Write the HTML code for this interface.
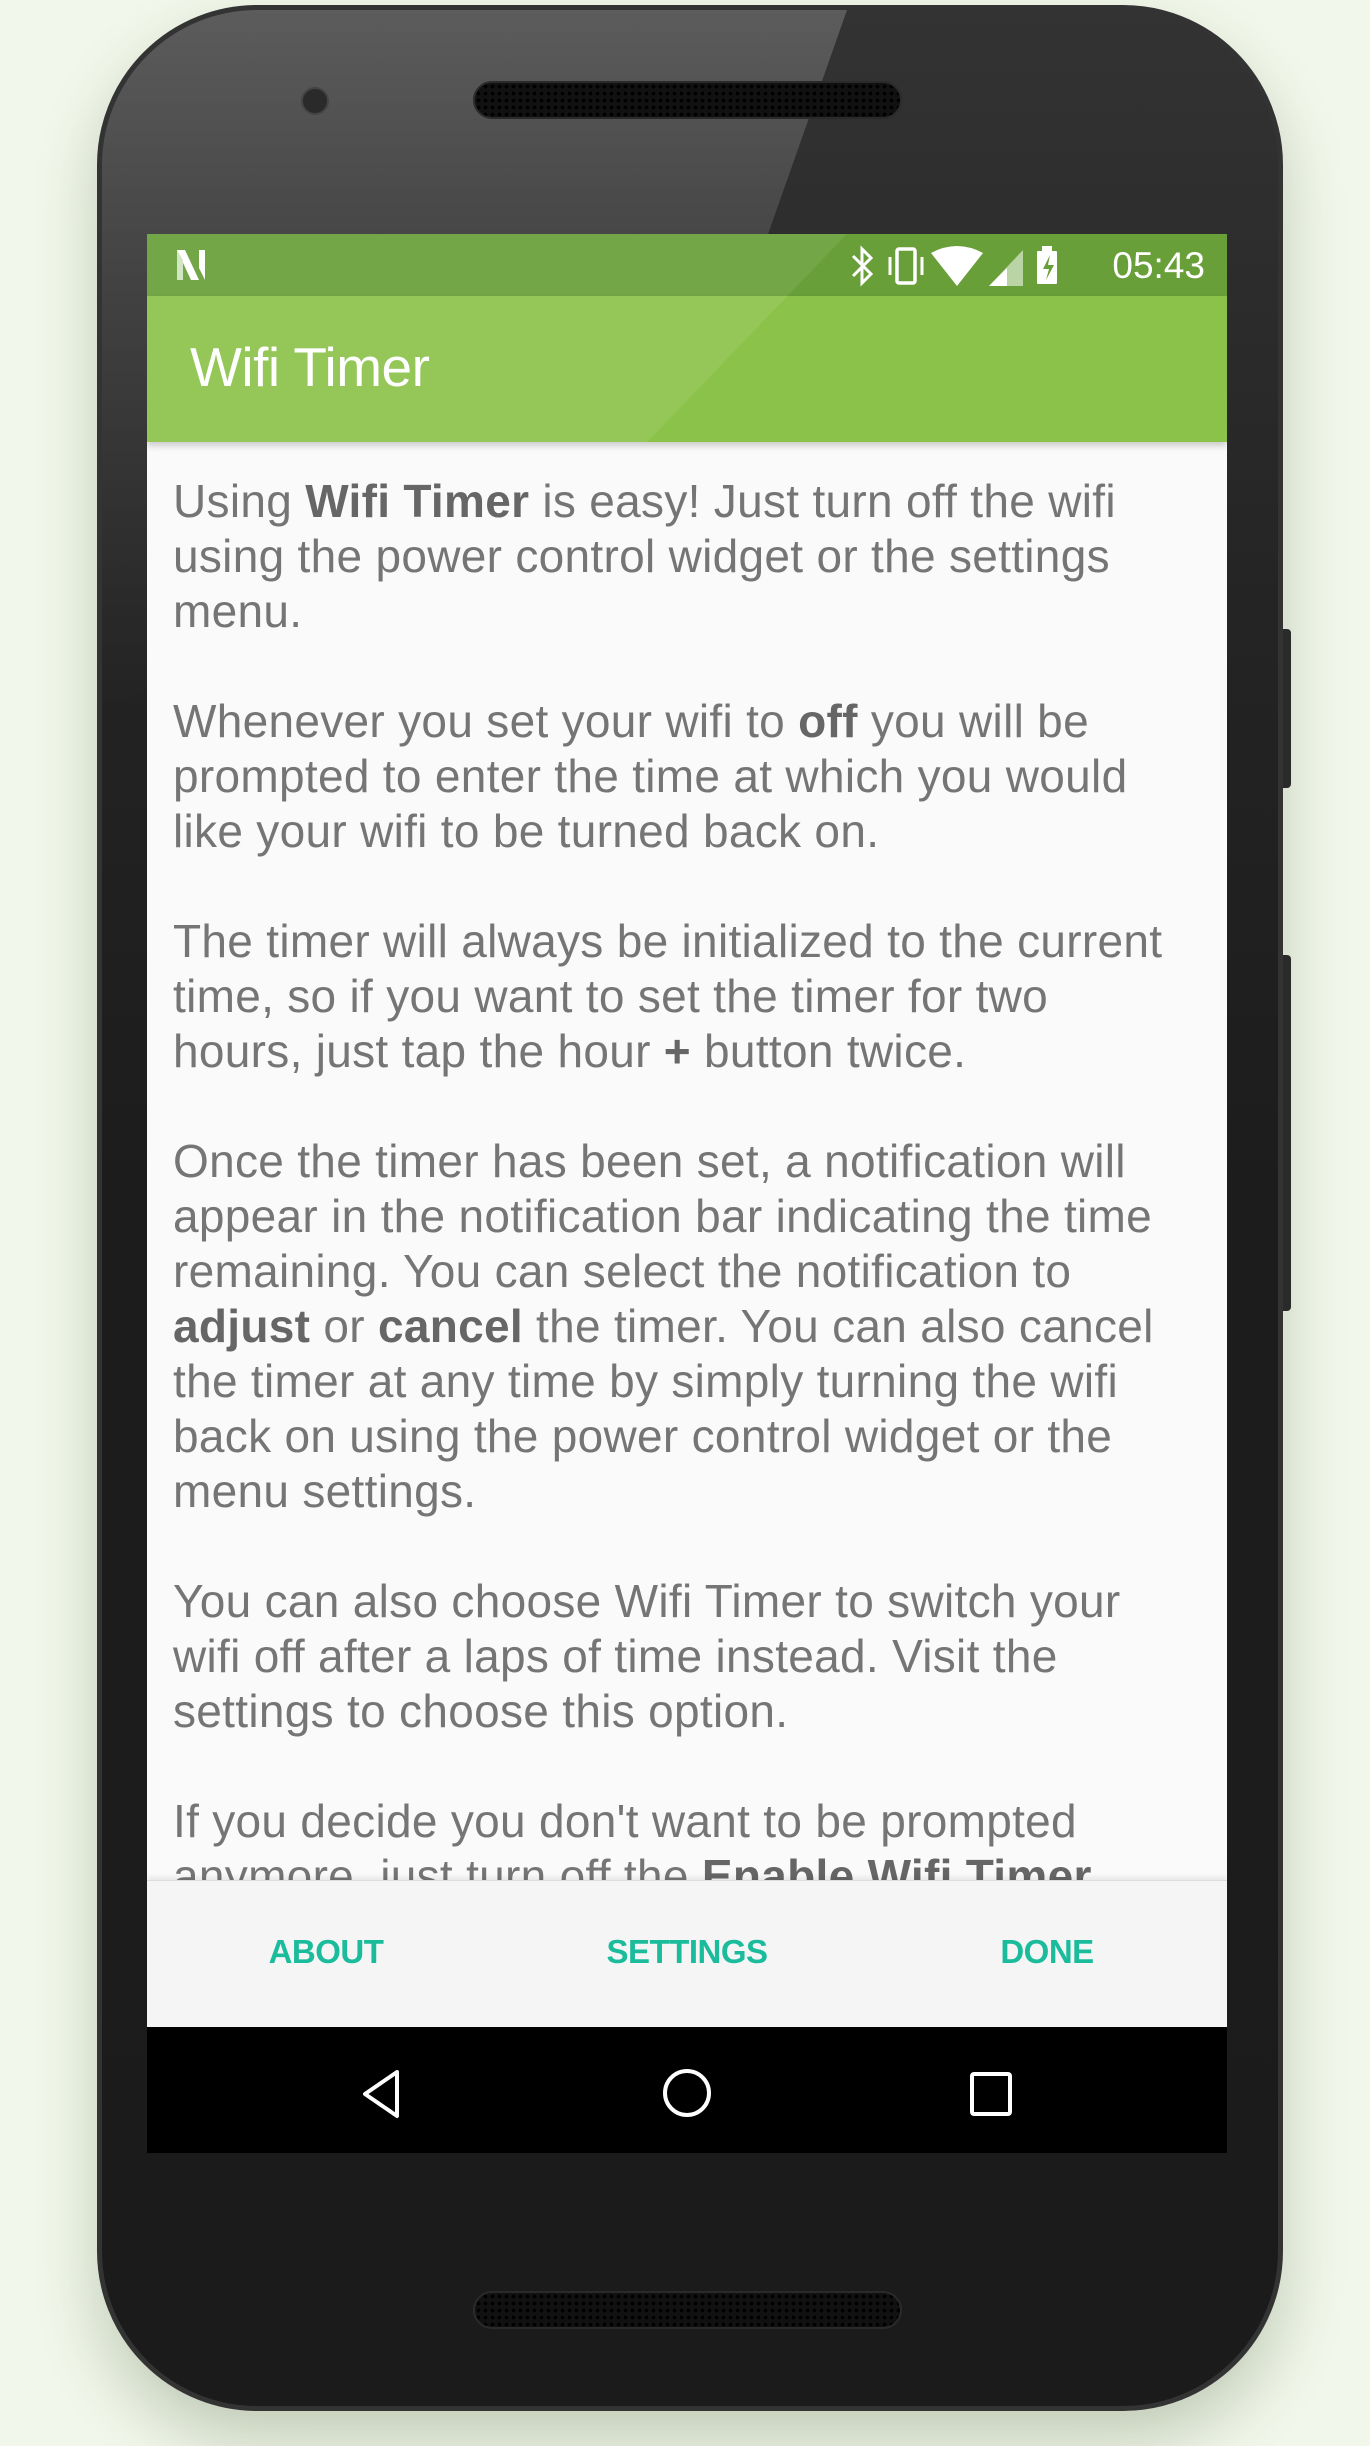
<!DOCTYPE html>
<html><head><meta charset="utf-8"><style>
*{margin:0;padding:0;box-sizing:border-box}
body{width:1370px;height:2446px;background:#f1f7ea;position:relative;overflow:hidden;font-family:"Liberation Sans",sans-serif}
.phone{position:absolute;left:97px;top:5px;width:1186px;height:2406px;border-radius:160px;background:linear-gradient(180deg,#333 0%,#242424 25%,#1c1c1c 50%,#1b1b1b 100%);border:5px solid #333;box-shadow:0 30px 60px rgba(60,80,40,.25)}
.glare{position:absolute;left:102px;top:10px;width:1176px;height:700px;border-radius:155px 155px 0 0;background:linear-gradient(180deg,rgba(255,255,255,.2) 0%,rgba(255,255,255,.1) 40%,rgba(255,255,255,0) 100%);clip-path:polygon(0 0,745px 0,590px 440px,0 700px)}
.screen{position:absolute;left:147px;top:234px;width:1080px;height:1919px;background:#fafafa;overflow:hidden}
.status{position:absolute;left:0;top:0;width:1080px;height:62px;background:#689f38}
.toolbar{position:absolute;left:0;top:62px;width:1080px;height:146px;background:#8bc34a;box-shadow:0 4px 6px rgba(0,0,0,.18)}
.title{position:absolute;left:43px;top:39px;font-size:55px;color:#fff;letter-spacing:-0.5px}
.ov{position:absolute;left:0;top:0;width:1080px;height:208px;background:rgba(255,255,255,.08);clip-path:polygon(0 0,700px 0,500px 208px,0 208px)}
.content{position:absolute;left:26px;top:240px;font-size:46px;line-height:55px;color:#757575;white-space:nowrap;letter-spacing:0.3px}
.content b{color:#666}
.content p{margin-bottom:55px}
.bar{position:absolute;left:0;top:1646px;width:1080px;height:147px;background:#f5f5f5;border-top:1px solid #ddd;box-shadow:0 -3px 5px rgba(0,0,0,.08)}
.btn{position:absolute;top:52px;font-size:33px;color:#1abc9c;transform:translateX(-50%);font-weight:bold;letter-spacing:-0.5px}
.nav{position:absolute;left:0;top:1793px;width:1080px;height:126px;background:#000}
.time{position:absolute;right:22px;top:11px;font-size:37px;color:#fff}
.spk{position:absolute;width:429px;height:38px;border-radius:19px;background:#111;border:2px solid #2a2a2a;background-image:radial-gradient(#000 35%,transparent 40%);background-size:7px 7px}
</style></head><body>
<div class="phone"></div>
<div class="glare"></div>
<div style="position:absolute;left:1283px;top:629px;width:8px;height:159px;background:#2a2a2a;border-radius:0 4px 4px 0"></div>
<div style="position:absolute;left:1283px;top:955px;width:8px;height:356px;background:#2a2a2a;border-radius:0 4px 4px 0"></div>
<div class="spk" style="left:473px;top:81px"></div>
<div class="spk" style="left:473px;top:2291px"></div>
<div style="position:absolute;left:301px;top:87px;width:28px;height:28px;border-radius:50%;background:#2a2a2a;border:2px solid #444"></div>
<div class="screen">
 <div class="status">
  <svg style="position:absolute;left:28px;top:14px" width="38" height="34" viewBox="0 0 38 34"><path d="M2 2h8l14 30h-8z" fill="#fff"/><path d="M2 2v30h6V12z" fill="#cfe3c0"/><path d="M24 2h6v30l-6-12z" fill="#fff"/></svg>
  <svg style="position:absolute;left:700px;top:10px" width="280" height="44" viewBox="0 0 280 44">
   <path d="M6 12l18 18-9 9V5l9 9-18 18" stroke="#fff" stroke-width="3" fill="none"/>
   <rect x="50" y="5" width="18" height="34" rx="2" stroke="#fff" stroke-width="3.5" fill="none"/>
   <path d="M43 13v18M75 13v18" stroke="#fff" stroke-width="3"/>
   <path d="M84 9q26-14 52 0l-26 33z" fill="#fff"/>
   <path d="M176 6v36h-34z" fill="#fff" opacity=".55"/><path d="M160 24v18h-18z" fill="#fff"/>
   <rect x="190" y="7" width="20" height="33" rx="1" fill="#fff"/><rect x="195" y="2" width="10" height="6" fill="#fff"/>
   <path d="M203 11l-7 14h6l-3 11 8-15h-6z" fill="#689f38"/>
  </svg>
  <div class="time">05:43</div>
 </div>
 <div class="toolbar"><div class="title">Wifi Timer</div></div>
 <div class="ov"></div>
 <div class="content">
 <p>Using <b>Wifi Timer</b> is easy! Just turn off the wifi<br>using the power control widget or the settings<br>menu.</p>
 <p>Whenever you set your wifi to <b>off</b> you will be<br>prompted to enter the time at which you would<br>like your wifi to be turned back on.</p>
 <p>The timer will always be initialized to the current<br>time, so if you want to set the timer for two<br>hours, just tap the hour <b>+</b> button twice.</p>
 <p>Once the timer has been set, a notification will<br>appear in the notification bar indicating the time<br>remaining. You can select the notification to<br><b>adjust</b> or <b>cancel</b> the timer. You can also cancel<br>the timer at any time by simply turning the wifi<br>back on using the power control widget or the<br>menu settings.</p>
 <p>You can also choose Wifi Timer to switch your<br>wifi off after a laps of time instead. Visit the<br>settings to choose this option.</p>
 <p>If you decide you don't want to be prompted<br>anymore, just turn off the <b>Enable Wifi Timer</b></p>
 </div>
 <div class="bar">
  <div class="btn" style="left:179px">ABOUT</div>
  <div class="btn" style="left:540px">SETTINGS</div>
  <div class="btn" style="left:900px">DONE</div>
 </div>
 <div class="nav">
  <svg style="position:absolute;left:212px;top:42px" width="46" height="50" viewBox="0 0 46 50"><path d="M38 3L6 25l32 22z" stroke="#fff" stroke-width="4" fill="none" stroke-linejoin="round"/></svg>
  <svg style="position:absolute;left:514px;top:40px" width="52" height="52"><circle cx="26" cy="26" r="22" stroke="#fff" stroke-width="4" fill="none"/></svg>
  <svg style="position:absolute;left:822px;top:44px" width="46" height="46"><rect x="3" y="3" width="38" height="40" rx="2" stroke="#fff" stroke-width="4" fill="none"/></svg>
 </div>
</div>
</body></html>
